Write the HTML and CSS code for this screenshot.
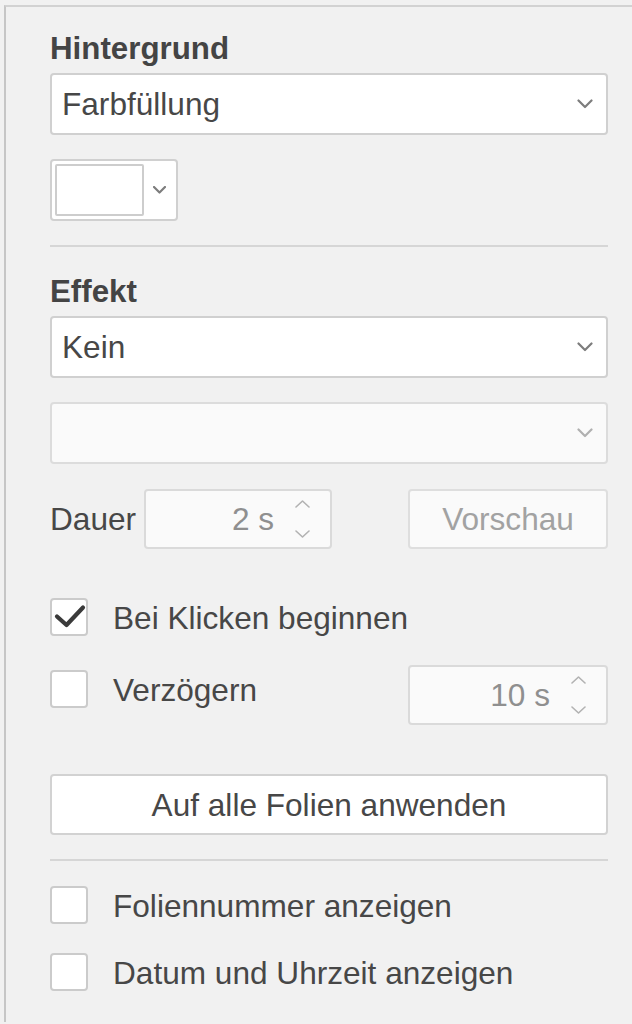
FILE: index.html
```html
<!DOCTYPE html>
<html lang="de">
<head>
<meta charset="utf-8">
<title>Folieneinstellungen</title>
<link rel="stylesheet" href="styles.css">
</head>
<body>
<div class="panel">
  <div class="content">
    <div class="title">Hintergrund</div>
    <div class="select">
      <span class="select-value">Farbfüllung</span>
      <svg class="caret" width="16" height="10" viewBox="0 0 16 10"><polyline points="1.5,1.5 8,8 14.5,1.5"/></svg>
    </div>
    <div class="color-btn">
      <span class="swatch"></span>
      <svg class="caret small" width="13" height="8" viewBox="0 0 13 8"><polyline points="1,1 6.5,6.5 12,1"/></svg>
    </div>

    <div class="sep sep-first"></div>

    <div class="title title-effect">Effekt</div>
    <div class="select">
      <span class="select-value">Kein</span>
      <svg class="caret" width="16" height="10" viewBox="0 0 16 10"><polyline points="1.5,1.5 8,8 14.5,1.5"/></svg>
    </div>
    <div class="select disabled gap">
      <span class="select-value"></span>
      <svg class="caret" width="16" height="10" viewBox="0 0 16 10"><polyline points="1.5,1.5 8,8 14.5,1.5"/></svg>
    </div>

    <div class="dur-row">
      <span class="label">Dauer</span>
      <div class="spin disabled">
        <span class="spin-value">2 s</span>
        <span class="spin-arrows">
          <svg width="15" height="8" viewBox="0 0 15 8"><polyline points="1,7 7.5,1 14,7"/></svg>
          <svg width="15" height="8" viewBox="0 0 15 8"><polyline points="1,1 7.5,7 14,1"/></svg>
        </span>
      </div>
      <button class="btn preview" type="button">Vorschau</button>
    </div>

    <label class="check-row first-check">
      <span class="box">
        <svg width="38" height="38" viewBox="0 0 38 38"><polyline class="tick" points="7,18.5 16.5,27 33,9.5"/></svg>
      </span>
      <span class="check-label">Bei Klicken beginnen</span>
    </label>

    <div class="check-row delay-row">
      <span class="box"></span>
      <span class="check-label">Verzögern</span>
      <div class="spin disabled delay-spin">
        <span class="spin-value">10 s</span>
        <span class="spin-arrows">
          <svg width="15" height="8" viewBox="0 0 15 8"><polyline points="1,7 7.5,1 14,7"/></svg>
          <svg width="15" height="8" viewBox="0 0 15 8"><polyline points="1,1 7.5,7 14,1"/></svg>
        </span>
      </div>
    </div>

    <button class="btn apply" type="button">Auf alle Folien anwenden</button>

    <div class="sep sep-second"></div>

    <label class="check-row footer-check">
      <span class="box"></span>
      <span class="check-label">Foliennummer anzeigen</span>
    </label>
    <label class="check-row footer-check second">
      <span class="box"></span>
      <span class="check-label">Datum und Uhrzeit anzeigen</span>
    </label>
  </div>
</div>
</body>
</html>
```

FILE: styles.css
```css
html, body {
  margin: 0;
  padding: 0;
  background: #f1f1f1;
}

body {
  font-family: "Liberation Sans", Arial, sans-serif;
  font-size: 31.6px;
  color: #474747;
  height: 1024px;
  overflow: hidden;
}

/* side panel frame */
.panel {
  margin: 5px 0 0 4px;
  border-top: 2px solid #d2d2d2;
  border-left: 2px solid #c6c6c6;
  height: 1017px;
  box-sizing: border-box;
}

.content {
  padding: 24px 24px 0 44px;
  display: flex;
  flex-direction: column;
}

.title {
  font-weight: bold;
  font-size: 31.3px;
  line-height: 36px;
  height: 36px;
  color: #444;
}

.title-effect {
  margin-top: 27px;
}

/* combo boxes */
.select {
  margin-top: 6px;
  height: 62px;
  box-sizing: border-box;
  background: #fff;
  border: 2px solid #d0d0d0;
  border-radius: 4px;
  display: flex;
  align-items: center;
  padding: 0 13px 0 10px;
  line-height: 36px;
}

.select.gap {
  margin-top: 24px;
}

.select.disabled {
  background: #fafafa;
  border-color: #dcdcdc;
}

.select-value {
  flex: 1;
}

.caret polyline {
  fill: none;
  stroke: #7d7d7d;
  stroke-width: 2.2;
  stroke-linecap: round;
  stroke-linejoin: round;
}

.select.disabled .caret polyline {
  stroke: #b0b0b0;
}

/* colour picker button */
.color-btn {
  margin-top: 24px;
  width: 128px;
  height: 62px;
  box-sizing: border-box;
  background: #fff;
  border: 2px solid #d0d0d0;
  border-radius: 4px;
  display: flex;
  align-items: center;
  padding: 0 0 0 3px;
}

.swatch {
  width: 89px;
  height: 52px;
  box-sizing: border-box;
  background: #fff;
  border: 2px solid #cdcdcd;
  border-radius: 2px;
}

.caret.small {
  margin-left: 9px;
}

.sep {
  height: 2px;
  background: #d6d6d6;
}

.sep-first {
  margin-top: 24px;
}

.sep-second {
  margin-top: 24px;
}

/* duration row */
.dur-row {
  margin-top: 25px;
  display: flex;
  align-items: center;
  height: 60px;
}

.label {
  line-height: 36px;
}

.spin {
  width: 188px;
  height: 60px;
  box-sizing: border-box;
  border: 2px solid #dadada;
  border-radius: 4px;
  background: #fafafa;
  display: flex;
  align-items: center;
  margin-left: 8px;
}

.spin-value {
  flex: 1;
  text-align: right;
  color: #8f8f8f;
  line-height: 36px;
}

.spin-arrows {
  width: 56px;
  display: flex;
  flex-direction: column;
  align-items: center;
  gap: 22px;
}

.spin-arrows svg {
  display: block;
}

.spin-arrows polyline {
  fill: none;
  stroke: #b2b2b2;
  stroke-width: 1.6;
  stroke-linecap: round;
  stroke-linejoin: round;
}

.btn {
  font-family: inherit;
  font-size: 31.6px;
  box-sizing: border-box;
  border: 2px solid #d6d6d6;
  border-radius: 4px;
  background: #fff;
  color: #474747;
  padding: 0;
  line-height: 36px;
}

.btn.preview {
  margin-left: auto;
  width: 200px;
  height: 60px;
  background: #fafafa;
  border-color: #dedede;
  color: #a2a2a2;
  margin-top: -1px;
}

/* checkboxes */
.check-row {
  display: flex;
  align-items: center;
  height: 38px;
}

.first-check {
  margin-top: 49px;
}

.box {
  width: 38px;
  height: 38px;
  flex: none;
  box-sizing: border-box;
  border: 2px solid #cbcbcb;
  border-radius: 4px;
  background: #fff;
  position: relative;
}

.box svg {
  position: absolute;
  left: -2px;
  top: -2px;
}

.tick {
  fill: none;
  stroke: #3a3a3a;
  stroke-width: 4.2;
  stroke-linecap: round;
  stroke-linejoin: round;
}

.check-label {
  margin-left: 25px;
  line-height: 36px;
  margin-top: 2px;
}

.delay-row {
  margin-top: 34px;
  align-items: flex-start;
  height: 55px;
}

.delay-spin {
  margin-left: auto;
  margin-top: -5px;
  width: 200px;
}

.btn.apply {
  margin-top: 49px;
  height: 61px;
  width: 100%;
  border-color: #d2d2d2;
}

.footer-check {
  margin-top: 25px;
}

.footer-check.second {
  margin-top: 29px;
}
```
